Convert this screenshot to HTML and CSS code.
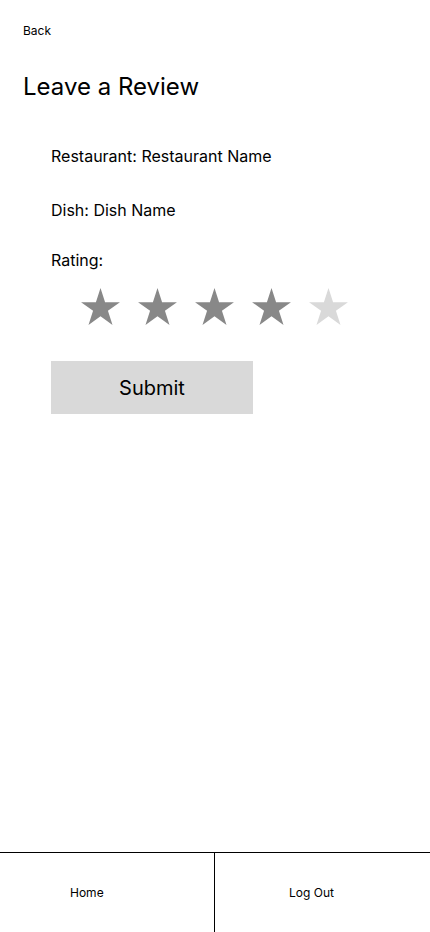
FILE: index.html
```html
<!DOCTYPE html>
<html lang="en">
<head>
<meta charset="utf-8">
<title>Leave a Review</title>
<link rel="stylesheet" href="styles.css">
</head>
<body>
<div class="page">
  <main class="content">
    <a class="back">Back</a>
    <h1 class="title">Leave a Review</h1>
    <section class="form">
      <p class="field field-restaurant">Restaurant: Restaurant Name</p>
      <p class="field field-dish">Dish: Dish Name</p>
      <p class="field field-rating">Rating:</p>
      <div class="stars">
        <svg class="star on" viewBox="0 0 41 37.1"><polygon points="20.5,0 25.1,14.17 40,14.17 27.95,22.92 32.55,37.08 20.5,28.33 8.45,37.08 13.05,22.92 1,14.17 15.9,14.17"/></svg>
        <svg class="star on" viewBox="0 0 41 37.1"><polygon points="20.5,0 25.1,14.17 40,14.17 27.95,22.92 32.55,37.08 20.5,28.33 8.45,37.08 13.05,22.92 1,14.17 15.9,14.17"/></svg>
        <svg class="star on" viewBox="0 0 41 37.1"><polygon points="20.5,0 25.1,14.17 40,14.17 27.95,22.92 32.55,37.08 20.5,28.33 8.45,37.08 13.05,22.92 1,14.17 15.9,14.17"/></svg>
        <svg class="star on" viewBox="0 0 41 37.1"><polygon points="20.5,0 25.1,14.17 40,14.17 27.95,22.92 32.55,37.08 20.5,28.33 8.45,37.08 13.05,22.92 1,14.17 15.9,14.17"/></svg>
        <svg class="star off" viewBox="0 0 41 37.1"><polygon points="20.5,0 25.1,14.17 40,14.17 27.95,22.92 32.55,37.08 20.5,28.33 8.45,37.08 13.05,22.92 1,14.17 15.9,14.17"/></svg>
      </div>
      <button class="submit" type="button">Submit</button>
    </section>
  </main>
  <nav class="tabbar">
    <a class="tab tab-home">Home</a>
    <a class="tab tab-logout">Log Out</a>
  </nav>
</div>
</body>
</html>
```
FILE: styles.css
```css
* { box-sizing: border-box; }
html, body {
  margin: 0;
  padding: 0;
  background: #fff;
}
body {
  font-family: Inter, "Liberation Sans", sans-serif;
  color: #000;
}
.page {
  min-height: 932px;
  display: flex;
  flex-direction: column;
}
.content {
  flex: 1;
  display: flex;
  flex-direction: column;
  align-items: flex-start;
  padding: 24px 0 0 23px;
}
.back {
  font-size: 12px;
  line-height: 14px;
}
.title {
  margin: 34px 0 0;
  font-size: 24px;
  font-weight: 400;
  line-height: 30px;
}
.form {
  margin-top: 44px;
  padding-left: 28px;
  display: flex;
  flex-direction: column;
  align-items: flex-start;
}
.field {
  margin: 0;
  font-size: 16px;
  line-height: 20px;
}
.field-dish { margin-top: 34px; }
.field-rating { margin-top: 30px; }
.stars {
  margin-top: 18px;
  margin-left: 29px;
  display: flex;
  gap: 16px;
}
.star {
  width: 41px;
  height: 37px;
  display: block;
}
.star.on { fill: #888888; }
.star.off { fill: #d9d9d9; }
.submit {
  margin-top: 36px;
  width: 202px;
  height: 53px;
  border: 0;
  background: #d9d9d9;
  font-family: inherit;
  font-size: 20px;
  color: #000;
  padding: 0;
}
.tabbar {
  height: 80px;
  border-top: 1px solid #000;
  display: flex;
}
.tab {
  display: flex;
  align-items: center;
  font-size: 12px;
}
.tab-home {
  width: 215px;
  border-right: 1px solid #000;
  padding-left: 70px;
}
.tab-logout {
  flex: 1;
  padding-left: 74px;
}
```
